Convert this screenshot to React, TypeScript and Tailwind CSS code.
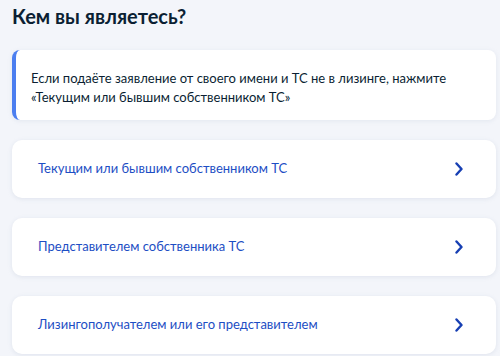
import React from "react";

function Chevron() {
  return (
    <svg width="10" height="14" viewBox="0 0 10 14" fill="none">
      <path d="M2.5 1.5 L7.5 7 L2.5 12.5" stroke="#173fb3" strokeWidth="2.4" strokeLinecap="round" strokeLinejoin="round" />
    </svg>
  );
}

const items = [
  "Текущим или бывшим собственником ТС",
  "Представителем собственника ТС",
  "Лизингополучателем или его представителем",
];

export default function App() {
  return (
    <div
      className="w-[500px] h-[356px] overflow-hidden bg-[#f3f5fa] px-[12px] pt-[2px]"
      style={{ fontFamily: "Lato, 'Noto Sans', sans-serif" }}
    >
      <h1 className="text-[20px] leading-[28px] font-bold text-[#0b1f33]">Кем вы являетесь?</h1>
      <div className="mt-[20px] w-[484px] h-[70px] rounded-[8px] bg-white border-l-[4px] border-[#4b7ef0] flex flex-col justify-center pt-[5px] pl-[15px] pr-[12px] shadow-[0_1px_4px_rgba(180,190,210,0.25)]">
        <p className="text-[13px] leading-[19px] text-[#0b1f33]">
          Если подаёте заявление от своего имени и ТС не в лизинге, нажмите «Текущим или бывшим собственником ТС»
        </p>
      </div>
      <div className="mt-[20px] flex flex-col gap-[20px]">
        {items.map((t) => (
          <div
            key={t}
            className="w-[484px] h-[58px] rounded-[10px] bg-white flex items-center justify-between pl-[26px] pr-[32px] shadow-[0_1px_4px_rgba(180,190,210,0.3)]"
          >
            <span className="text-[13px] text-[#1d4ec4]">{t}</span>
            <Chevron />
          </div>
        ))}
      </div>
    </div>
  );
}
